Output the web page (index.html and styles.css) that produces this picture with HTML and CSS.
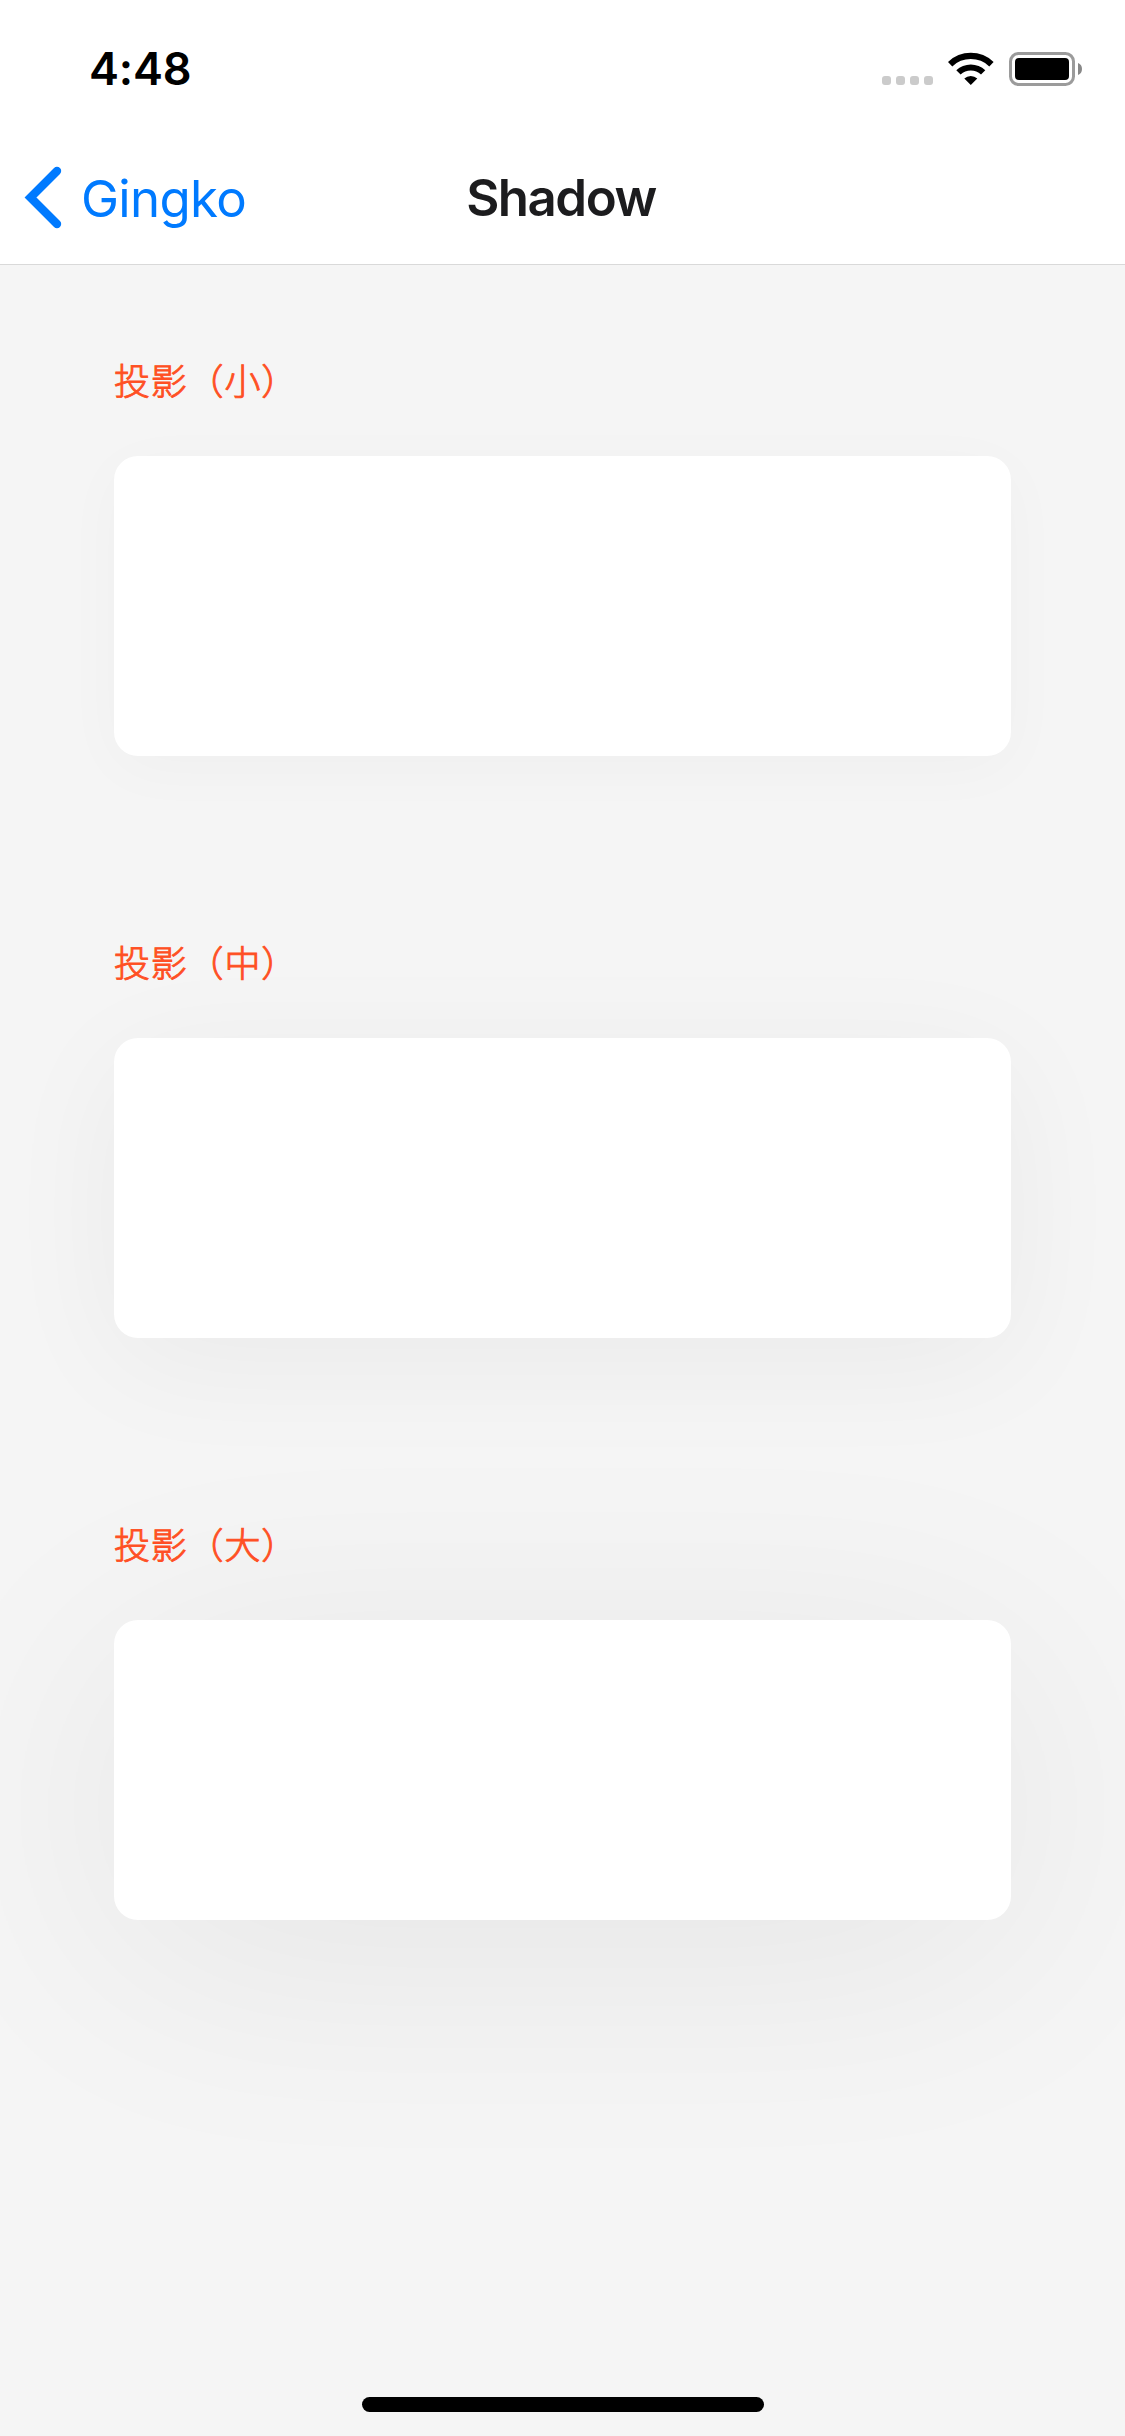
FILE: index.html
```
<!DOCTYPE html>
<html lang="zh">
<head>
<meta charset="utf-8">
<title>Shadow</title>
<link rel="stylesheet" href="styles.css">
</head>
<body>
<header class="header">
  <div class="status">
    <span class="time">4:48</span>
    <div class="indicators">
      <svg class="signal" width="52" height="10" viewBox="0 0 52 10" fill="#cbcbcb"><rect width="9" height="9" rx="3"/><rect x="14" width="9" height="9" rx="3"/><rect x="28" width="9" height="9" rx="3"/><rect x="42" width="9" height="9" rx="3"/></svg>
      <svg class="wifi" width="46" height="33" viewBox="0 0 46 33"><path d="M0 10A32.500 32.500 0 0 1 45.600 10L41.300 14.500A26.300 26.300 0 0 0 4.300 14.500ZM8.300 18.300A21 21 0 0 1 37.300 18.300L33 22.600A15 15 0 0 0 12.600 22.600ZM16.300 26.400A9.700 9.700 0 0 1 29.300 26.400L22.800 33Z"/></svg>
      <svg class="battery" width="74" height="34" viewBox="0 0 74 34"><rect x="1.500" y="1.500" width="63" height="31" rx="8" fill="none" stroke="#9b9b9b" stroke-width="3"/><rect x="6" y="6" width="54" height="22" rx="4"/><path d="M69 11A6.500 6.500 0 0 1 69 23Z" fill="#888"/></svg>
    </div>
  </div>
  <nav class="nav">
    <a class="back"><svg class="chevron" width="38" height="64" viewBox="0 0 38 64"><path d="M33 5L6.500 31.500L33 58"/></svg><span class="back-label">Gingko</span></a>
    <h1 class="title">Shadow</h1>
  </nav>
</header>
<main class="content">
  <section class="sample"><h2 class="label">投影（小）</h2><div class="card small"></div></section>
  <section class="sample"><h2 class="label">投影（中）</h2><div class="card medium"></div></section>
  <section class="sample"><h2 class="label">投影（大）</h2><div class="card large"></div></section>
</main>
<div class="home"></div>
</body>
</html>
```
FILE: styles.css
```
* { box-sizing: border-box; }
body {
  margin: 0;
  height: 2436px;
  display: flex;
  flex-direction: column;
  align-items: center;
  overflow: hidden;
  background: #f5f5f5;
  font-family: Inter, "Noto Sans CJK SC", sans-serif;
}
.header {
  width: 100%;
  height: 265px;
  background: #fff;
  border-bottom: 1px solid #d9d9d9;
}
.status {
  height: 132px;
  padding: 0 42px 0 89px;
  display: flex;
  justify-content: space-between;
}
.time {
  margin-top: 41px;
  font-size: 45px;
  line-height: 56px;
  font-weight: 600;
  letter-spacing: -0.2px;
}
.indicators {
  display: flex;
  align-items: flex-start;
}
.signal { margin: 76px 14px 0 0; }
.wifi { margin: 52px 15px 0 0; }
.battery { margin-top: 52px; }
.nav {
  height: 132px;
  padding: 0 24px;
  display: grid;
  grid-template-columns: 1fr auto 1fr;
  align-items: center;
}
.back {
  display: flex;
  align-items: center;
  gap: 19px;
  color: #007aff;
}
.chevron {
  fill: none;
  stroke: #007aff;
  stroke-width: 8.4;
  stroke-linecap: round;
}
.back-label {
  padding-top: 1px;
  font-size: 51px;
  line-height: 64px;
  letter-spacing: -0.7px;
}
.title {
  margin: 0;
  padding-right: 3px;
  font-size: 51px;
  line-height: 64px;
  font-weight: 600;
  letter-spacing: -1.5px;
  color: #1c1c1e;
}
.content {
  width: 897px;
  padding-top: 89px;
  display: flex;
  flex-direction: column;
  gap: 180px;
}
.sample {
  height: 402px;
  display: flex;
  flex-direction: column;
  justify-content: space-between;
}
.label {
  margin: 0;
  font-family: "Noto Sans CJK SC", sans-serif;
  font-size: 36px;
  line-height: 50px;
  font-weight: 300;
  letter-spacing: 0.8px;
  color: #ff4f23;
  -webkit-text-stroke: 0.9px #ff4f23;
}
.card {
  position: relative;
  height: 300px;
  border-radius: 24px;
  background: #fff;
}
/* Blurred while opaque, then faded, so the wide shadows keep smooth steps */
.card::before {
  content: "";
  position: absolute;
  z-index: -1;
  inset: 0;
  border-radius: 24px;
  background: #000;
}
.small::before {
  top: 12px;
  bottom: -12px;
  filter: blur(32px);
  opacity: 0.022;
}
.medium::before {
  top: 24px;
  bottom: -24px;
  filter: blur(64px);
  opacity: 0.042;
}
.large::before {
  top: 38px;
  bottom: -38px;
  filter: blur(126px);
  opacity: 0.062;
}
.home {
  width: 402px;
  height: 15px;
  margin-top: auto;
  margin-bottom: 24px;
  border-radius: 8px;
  background: #000;
}
```
